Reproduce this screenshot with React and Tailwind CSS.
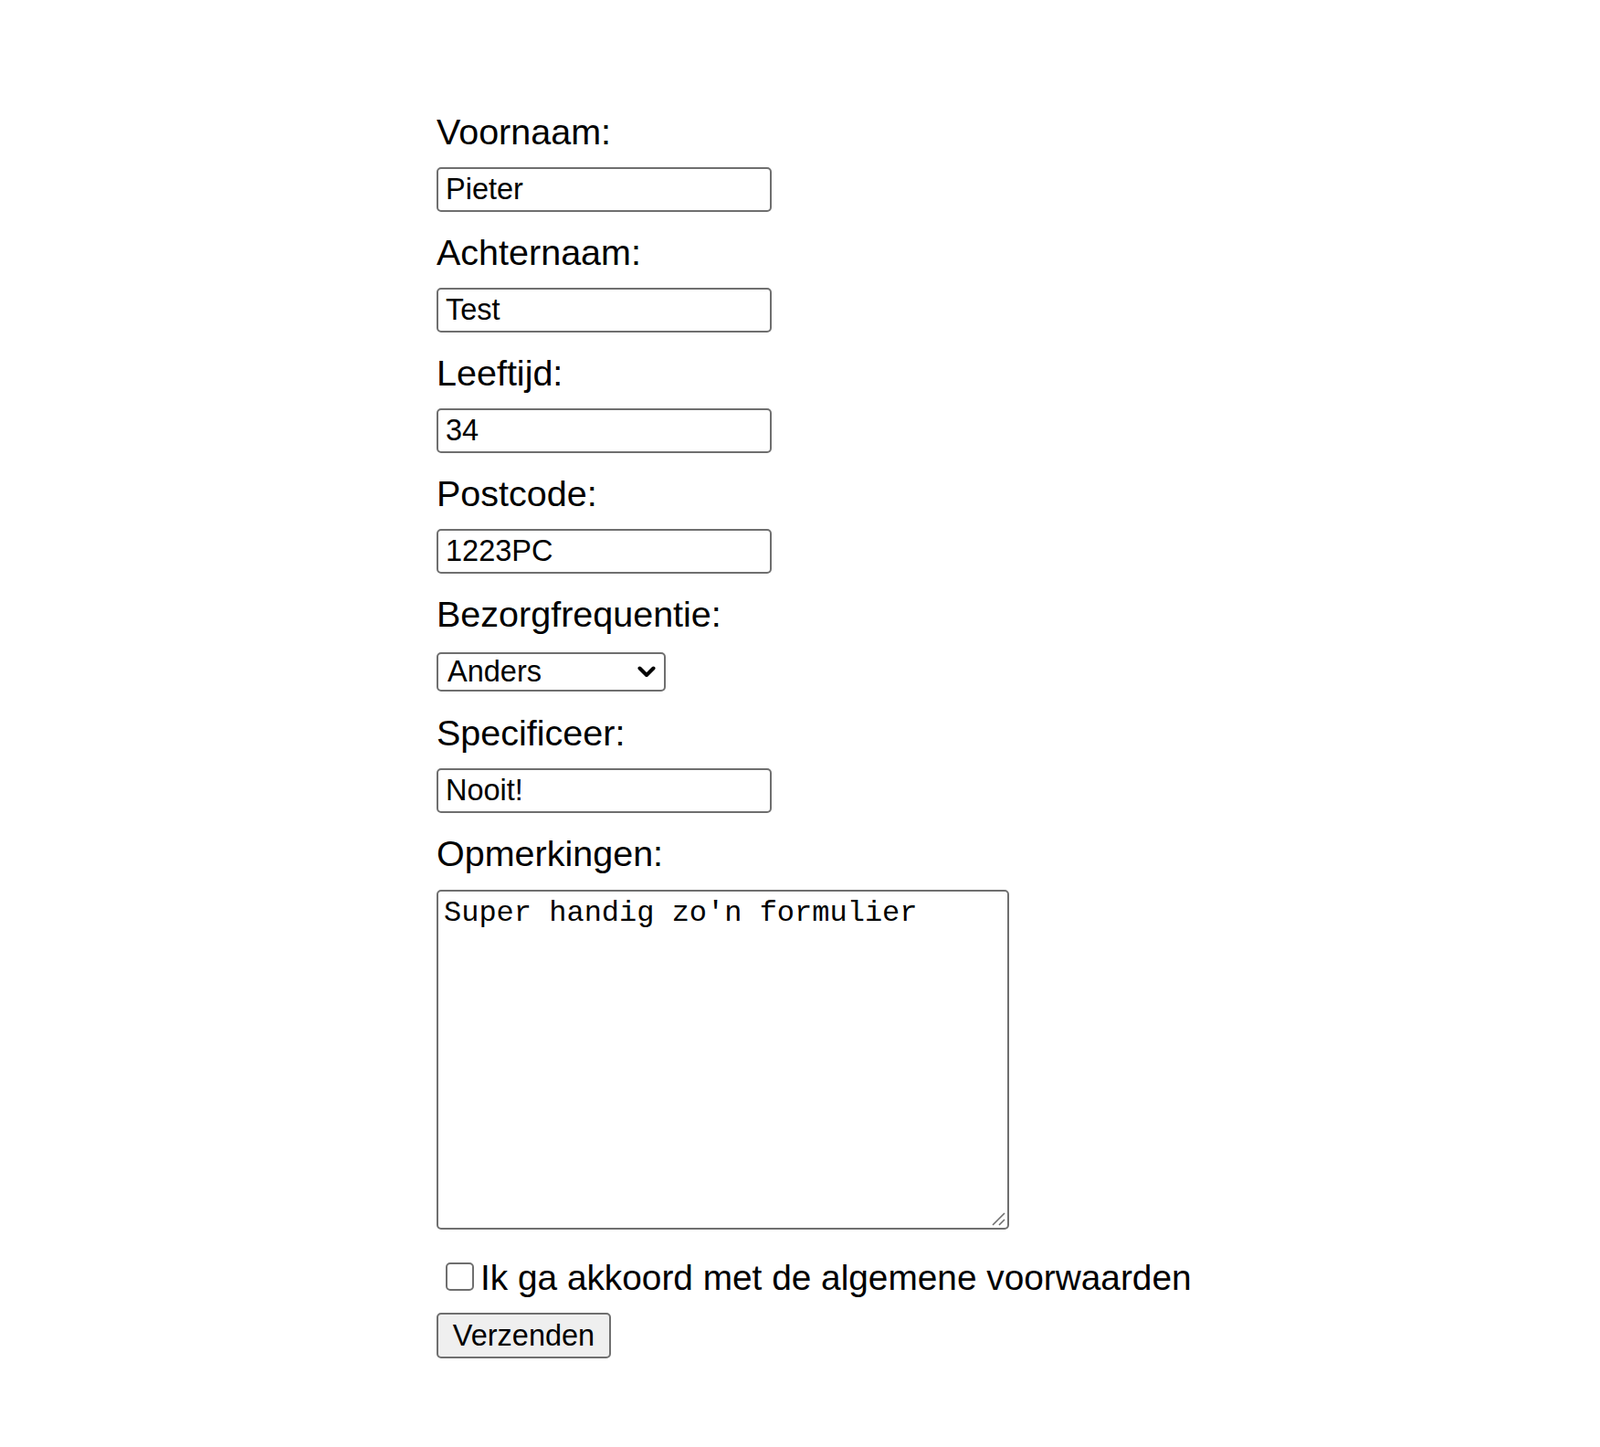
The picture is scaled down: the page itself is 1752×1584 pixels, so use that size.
import { useState } from "react"

const labelClass = "block text-[39.5px] leading-[44px] text-black"
const inputClass =
  "block w-[367px] h-[49px] rounded-[5px] border-2 border-[#6f6f6f] bg-white px-[8px] text-[32.5px] text-black outline-none"

function Field({ label, value, className = "" }) {
  return (
    <div className={className}>
      <label className={labelClass}>{label}</label>
      <input type="text" defaultValue={value} className={`${inputClass} mt-[17px]`} />
    </div>
  )
}

export default function App() {
  const [frequency, setFrequency] = useState("anders")
  const [agreed, setAgreed] = useState(false)

  return (
    <div className="min-h-screen bg-white font-['Liberation_Sans',Arial,sans-serif]">
      <form
        className="mx-auto flex w-[796px] flex-col pt-[122px] pb-[97px]"
        onSubmit={(e) => e.preventDefault()}
      >
        <Field label="Voornaam:" value="Pieter" />
        <Field label="Achternaam:" value="Test" className="mt-[22px]" />
        <Field label="Leeftijd:" value="34" className="mt-[22px]" />
        <Field label="Postcode:" value="1223PC" className="mt-[22px]" />

        <div className="mt-[22px]">
          <label className={labelClass}>Bezorgfrequentie:</label>
          <div className="relative mt-[20px] w-[251px]">
            <select
              value={frequency}
              onChange={(e) => setFrequency(e.target.value)}
              className="block h-[43px] w-[251px] appearance-none rounded-[5px] border-2 border-[#6f6f6f] bg-white pl-[10px] text-[32.5px] leading-[37px] text-black outline-none"
            >
              <option value="dagelijks">Dagelijks</option>
              <option value="wekelijks">Wekelijks</option>
              <option value="maandelijks">Maandelijks</option>
              <option value="anders">Anders</option>
            </select>
            <svg
              className="pointer-events-none absolute right-[11px] top-[15px]"
              width="20"
              height="13"
              viewBox="0 0 20 13"
              fill="none"
            >
              <path d="M2.5 2.5 L10 10 L17.5 2.5" stroke="black" strokeWidth="4" strokeLinecap="round" strokeLinejoin="round" />
            </svg>
          </div>
        </div>

        <Field label="Specificeer:" value="Nooit!" className="mt-[23px]" />

        <div className="mt-[22px]">
          <label className={labelClass}>Opmerkingen:</label>
          <div className="relative mt-[18px] w-[627px]">
            <textarea
              defaultValue="Super handig zo'n formulier"
              className="block h-[372px] w-[627px] resize-none rounded-[5px] border-2 border-[#6f6f6f] bg-white px-[6px] py-[5px] font-['Liberation_Mono','Courier_New',monospace] text-[32px] leading-[37px] text-black outline-none"
            />
            <svg
              className="pointer-events-none absolute bottom-[4px] right-[4px]"
              width="16"
              height="16"
              viewBox="0 0 16 16"
              fill="none"
            >
              <path d="M2 15 L15 2 M9 15 L15 9" stroke="#6f6f6f" strokeWidth="1.6" />
            </svg>
          </div>
        </div>

        <div className="mt-[29px] flex items-start whitespace-nowrap">
          <input
            type="checkbox"
            checked={agreed}
            onChange={(e) => setAgreed(e.target.checked)}
            className="ml-[10px] mr-[7px] mt-[7px] h-[31px] w-[31px] shrink-0 appearance-none rounded-[5px] border-2 border-[#6f6f6f] bg-white checked:bg-[#0075ff]"
          />
          <span className="mt-[2px] text-[38.8px] leading-[44px] text-black">
            Ik ga akkoord met de algemene voorwaarden
          </span>
        </div>

        <button
          type="submit"
          className="mt-[16px] h-[50px] w-[191px] rounded-[5px] border-2 border-[#6f6f6f] bg-[#efefef] text-[32.5px] leading-[37px] text-black"
        >
          Verzenden
        </button>
      </form>
    </div>
  )
}
